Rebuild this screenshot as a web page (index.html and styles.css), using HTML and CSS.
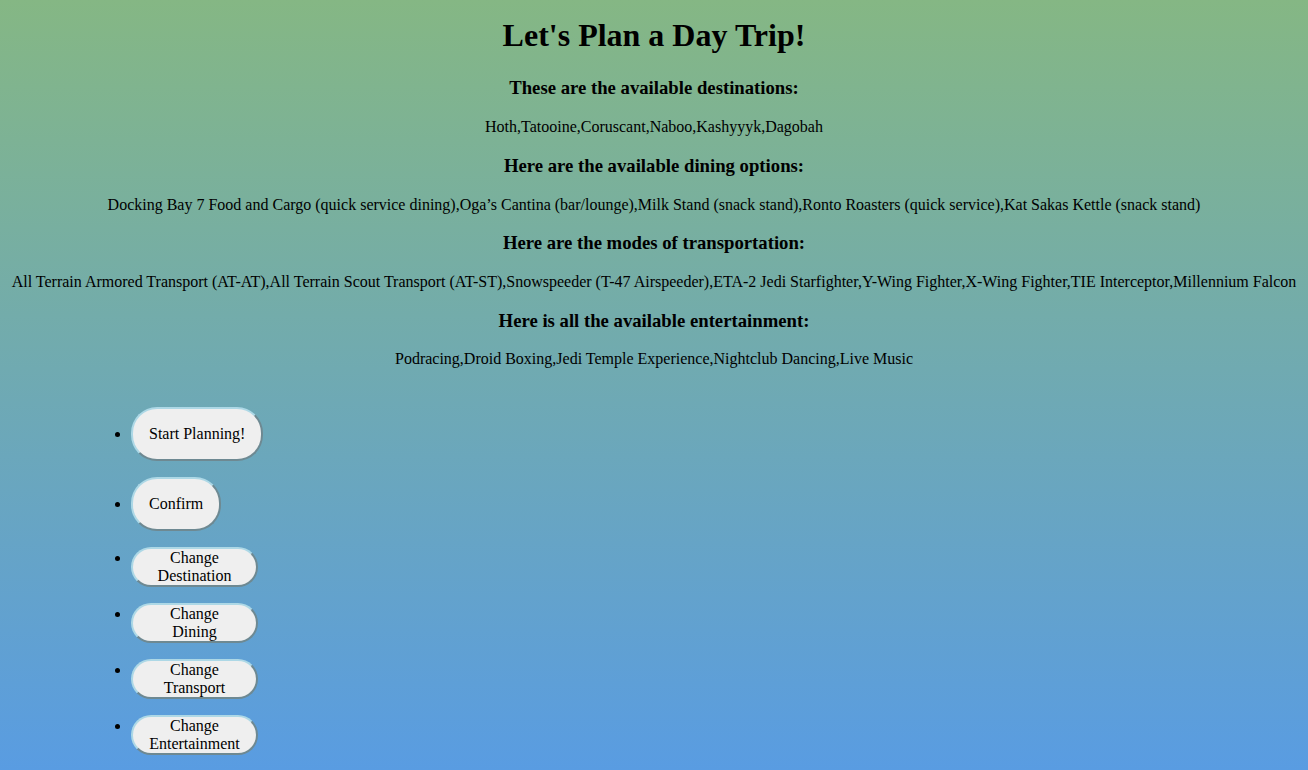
FILE: index.html
```html
<!DOCTYPE html>
<html>
<head>
<meta charset="utf-8">
<title>Day Trip</title>
<link rel="stylesheet" href="styles.css">
</head>
<body>
<div class="info">
  <h1 class="title">Let's Plan a Day Trip!</h1>
  <h3 class="label">These are the available destinations:</h3>
  <p class="list">Hoth,Tatooine,Coruscant,Naboo,Kashyyyk,Dagobah</p>
  <h3 class="label">Here are the available dining options:</h3>
  <p class="list">Docking Bay 7 Food and Cargo (quick service dining),Oga’s Cantina (bar/lounge),Milk Stand (snack stand),Ronto Roasters (quick service),Kat Sakas Kettle (snack stand)</p>
  <h3 class="label">Here are the modes of transportation:</h3>
  <p class="list">All Terrain Armored Transport (AT-AT),All Terrain Scout Transport (AT-ST),Snowspeeder (T-47 Airspeeder),ETA-2 Jedi Starfighter,Y-Wing Fighter,X-Wing Fighter,TIE Interceptor,Millennium Falcon</p>
  <h3 class="label">Here is all the available entertainment:</h3>
  <p class="list">Podracing,Droid Boxing,Jedi Temple Experience,Nightclub Dancing,Live Music</p>
</div>
<ul class="actions">
  <li><button class="btn btn-big">Start Planning!</button></li>
  <li><button class="btn btn-big">Confirm</button></li>
  <li><button class="btn btn-change">Change Destination</button></li>
  <li><button class="btn btn-change">Change Dining</button></li>
  <li><button class="btn btn-change">Change Transport</button></li>
  <li><button class="btn btn-change">Change Entertainment</button></li>
</ul>
</body>
</html>
```
FILE: styles.css
```css
html {
  margin: 0;
  padding: 0;
}
body {
  margin: 0;
  padding: 0 8px;
  min-height: 770px;
  box-sizing: border-box;
  font-family: "Liberation Serif", "Times New Roman", serif;
  color: #000;
  background: linear-gradient(to bottom, #85b784 0%, #599ce2 100%);
}
.info {
  text-align: center;
  padding-top: 17px;
}
.title {
  font-size: 32px;
  font-weight: bold;
  margin: 0 0 23.44px 0;
}
.label {
  font-size: 18.72px;
  font-weight: bold;
  margin: 18.72px 0;
}
.list {
  font-size: 16px;
  margin: 16px 0;
}
.actions {
  margin: 39px 0 0 0;
  padding: 0 0 0 123px;
  list-style: disc;
}
.actions li {
  margin: 0 0 16px 0;
  font-size: 16px;
  line-height: 18px;
}
.btn {
  font-family: "Liberation Serif", "Times New Roman", serif;
  font-size: 16px;
  line-height: 18px;
  color: #000;
  background: #efefef;
  border: 2px outset lightblue;
  border-radius: 26px;
  cursor: pointer;
}
.btn-big {
  padding: 16px 16px;
}
.btn-change {
  width: 127px;
  padding: 0 16px;
  border-radius: 22px;
  vertical-align: -18px;
}
```
